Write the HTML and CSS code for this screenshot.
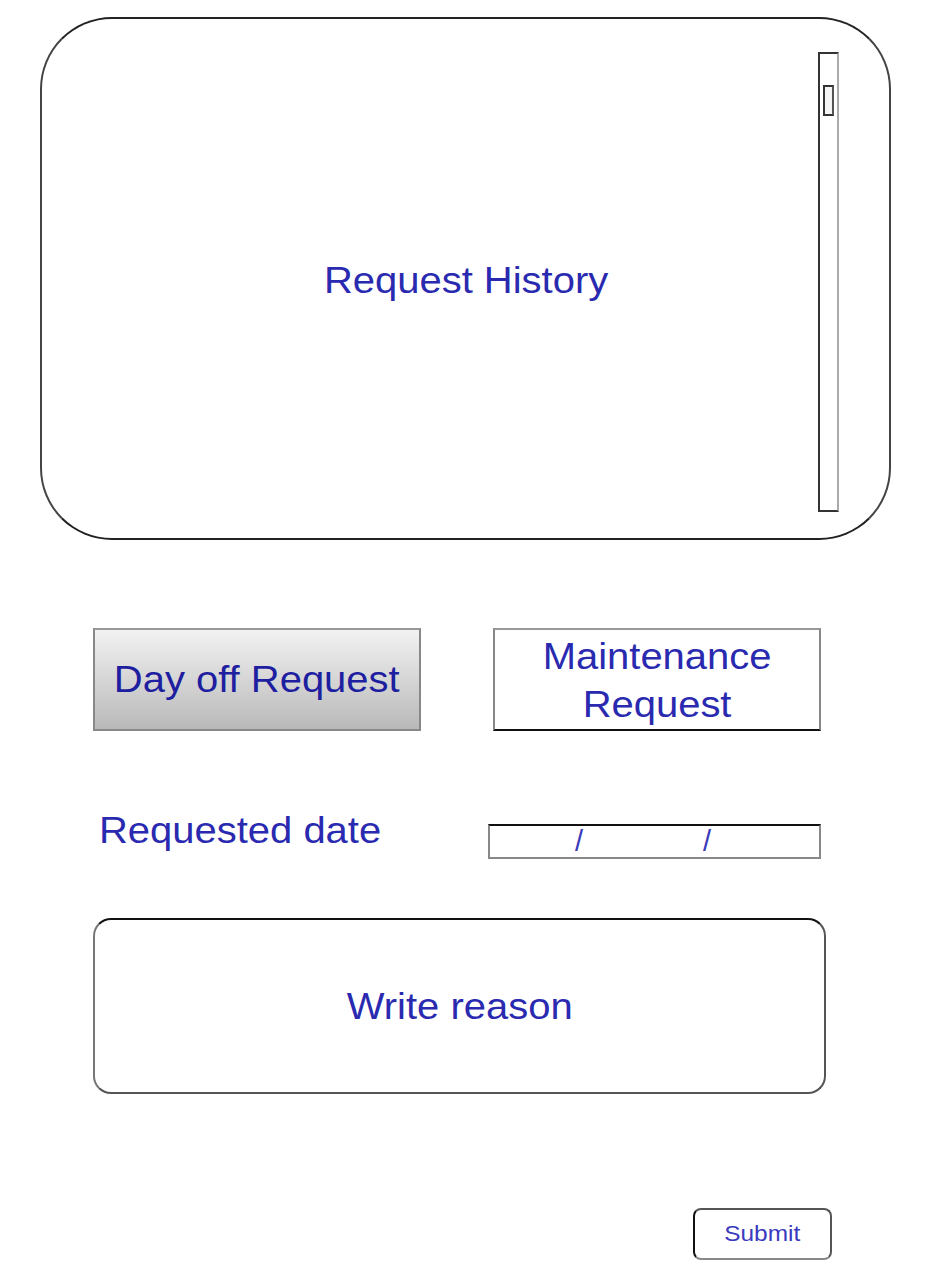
FILE: index.html
```html
<!DOCTYPE html>
<html lang="en">
<head>
    <meta charset="UTF-8">
    <meta name="viewport" content="width=device-width, initial-scale=1.0">
    <title>Requests</title>
    <link rel="stylesheet" href="styles.css">
</head>
<body>
    <div class="page">
        <!-- History panel -->
        <div class="history">
            <p class="history-title"><span class="wide">Request History</span></p>
            <div class="scrollbar">
                <div class="thumb"></div>
            </div>
        </div>

        <!-- Request type buttons -->
        <div class="type-row">
            <button class="type-btn day-off"><span class="wide">Day off Request</span></button>
            <button class="type-btn maintenance"><span class="wide">Maintenance<br>Request</span></button>
        </div>

        <!-- Date -->
        <div class="date-row">
            <label class="date-label"><span class="wide">Requested date</span></label>
            <div class="date-field">
                <span class="slash">/</span>
                <span class="slash">/</span>
            </div>
        </div>

        <!-- Reason -->
        <div class="reason"><span class="wide">Write reason</span></div>

        <div class="submit-row">
            <button class="submit"><span class="wide">Submit</span></button>
        </div>
    </div>
</body>
</html>
```

FILE: styles.css
```css
/* Request form mockup */
body {
    font-family: "Liberation Sans", Arial, sans-serif;
    background-color: #fff;
    color: #2a2ab0;
    margin: 0;
}

.page {
    width: 950px;
    padding-top: 17px;
}

/* mockup text is drawn a little wider than the font */
.wide {
    display: inline-block;
    transform: scaleX(1.11);
}

.history {
    position: relative;
    box-sizing: border-box;
    width: 851px;
    height: 523px;
    margin-left: 40px;
    border: 2px solid #444;
    border-top-color: #222;
    border-bottom-color: #222;
    border-radius: 72px;
    display: flex;
    align-items: center;
    justify-content: center;
}

.history-title {
    margin: 4px 0 0 2px;
    font-size: 36px;
}

.scrollbar {
    position: absolute;
    top: 33px;
    right: 50px;
    box-sizing: border-box;
    width: 21px;
    height: 460px;
    border: 2px solid #333;
    border-right-color: #aaa;
}

.thumb {
    box-sizing: border-box;
    width: 11px;
    height: 31px;
    margin: 31px 0 0 3px;
    border: 2px solid #333;
    border-right-color: #555;
    background: #f4f4f4;
}

.type-row {
    display: flex;
    gap: 72px;
    margin: 88px 0 0 93px;
}

.type-btn {
    box-sizing: border-box;
    width: 328px;
    height: 103px;
    font-family: inherit;
    font-size: 36px;
    line-height: 48px;
    color: #2a2ab0;
    padding: 0;
    border: 2px solid #888;
    border-top-color: #999;
}

.day-off {
    background: linear-gradient(#f2f2f2, #b9b9b9);
    color: #1e1ea0;
}

.maintenance {
    background: #fff;
    border-bottom-color: #111;
    padding-top: 3px;
}

.date-row {
    display: flex;
    align-items: flex-start;
    margin: 79px 0 0 99px;
}

.date-label {
    width: 389px;
    font-size: 36px;
    line-height: 42px;
}

.date-label .wide {
    transform-origin: left center;
}

.date-field {
    box-sizing: border-box;
    width: 333px;
    height: 35px;
    margin-top: 14px;
    border: 2px solid #888;
    border-top-color: #111;
    display: flex;
    align-items: center;
    font-size: 29px;
    line-height: 31px;
}

.slash {
    margin-left: 85px;
    color: #3a3ab8;
}

.slash + .slash {
    margin-left: 120px;
}

.reason {
    box-sizing: border-box;
    width: 733px;
    height: 176px;
    margin: 59px 0 0 93px;
    border: 2px solid #555;
    border-top-color: #111;
    border-left-color: #777;
    border-radius: 18px;
    display: flex;
    align-items: center;
    justify-content: center;
    font-size: 36px;
    padding-top: 2px;
}

.submit-row {
    display: flex;
    justify-content: flex-end;
    padding-right: 118px;
    margin-top: 114px;
}

.submit {
    box-sizing: border-box;
    width: 139px;
    height: 52px;
    background: #fff;
    border: 2px solid #555;
    border-left-color: #111;
    border-bottom-color: #888;
    border-radius: 8px;
    font-family: inherit;
    font-size: 22px;
    color: #3a3ac0;
}
```
